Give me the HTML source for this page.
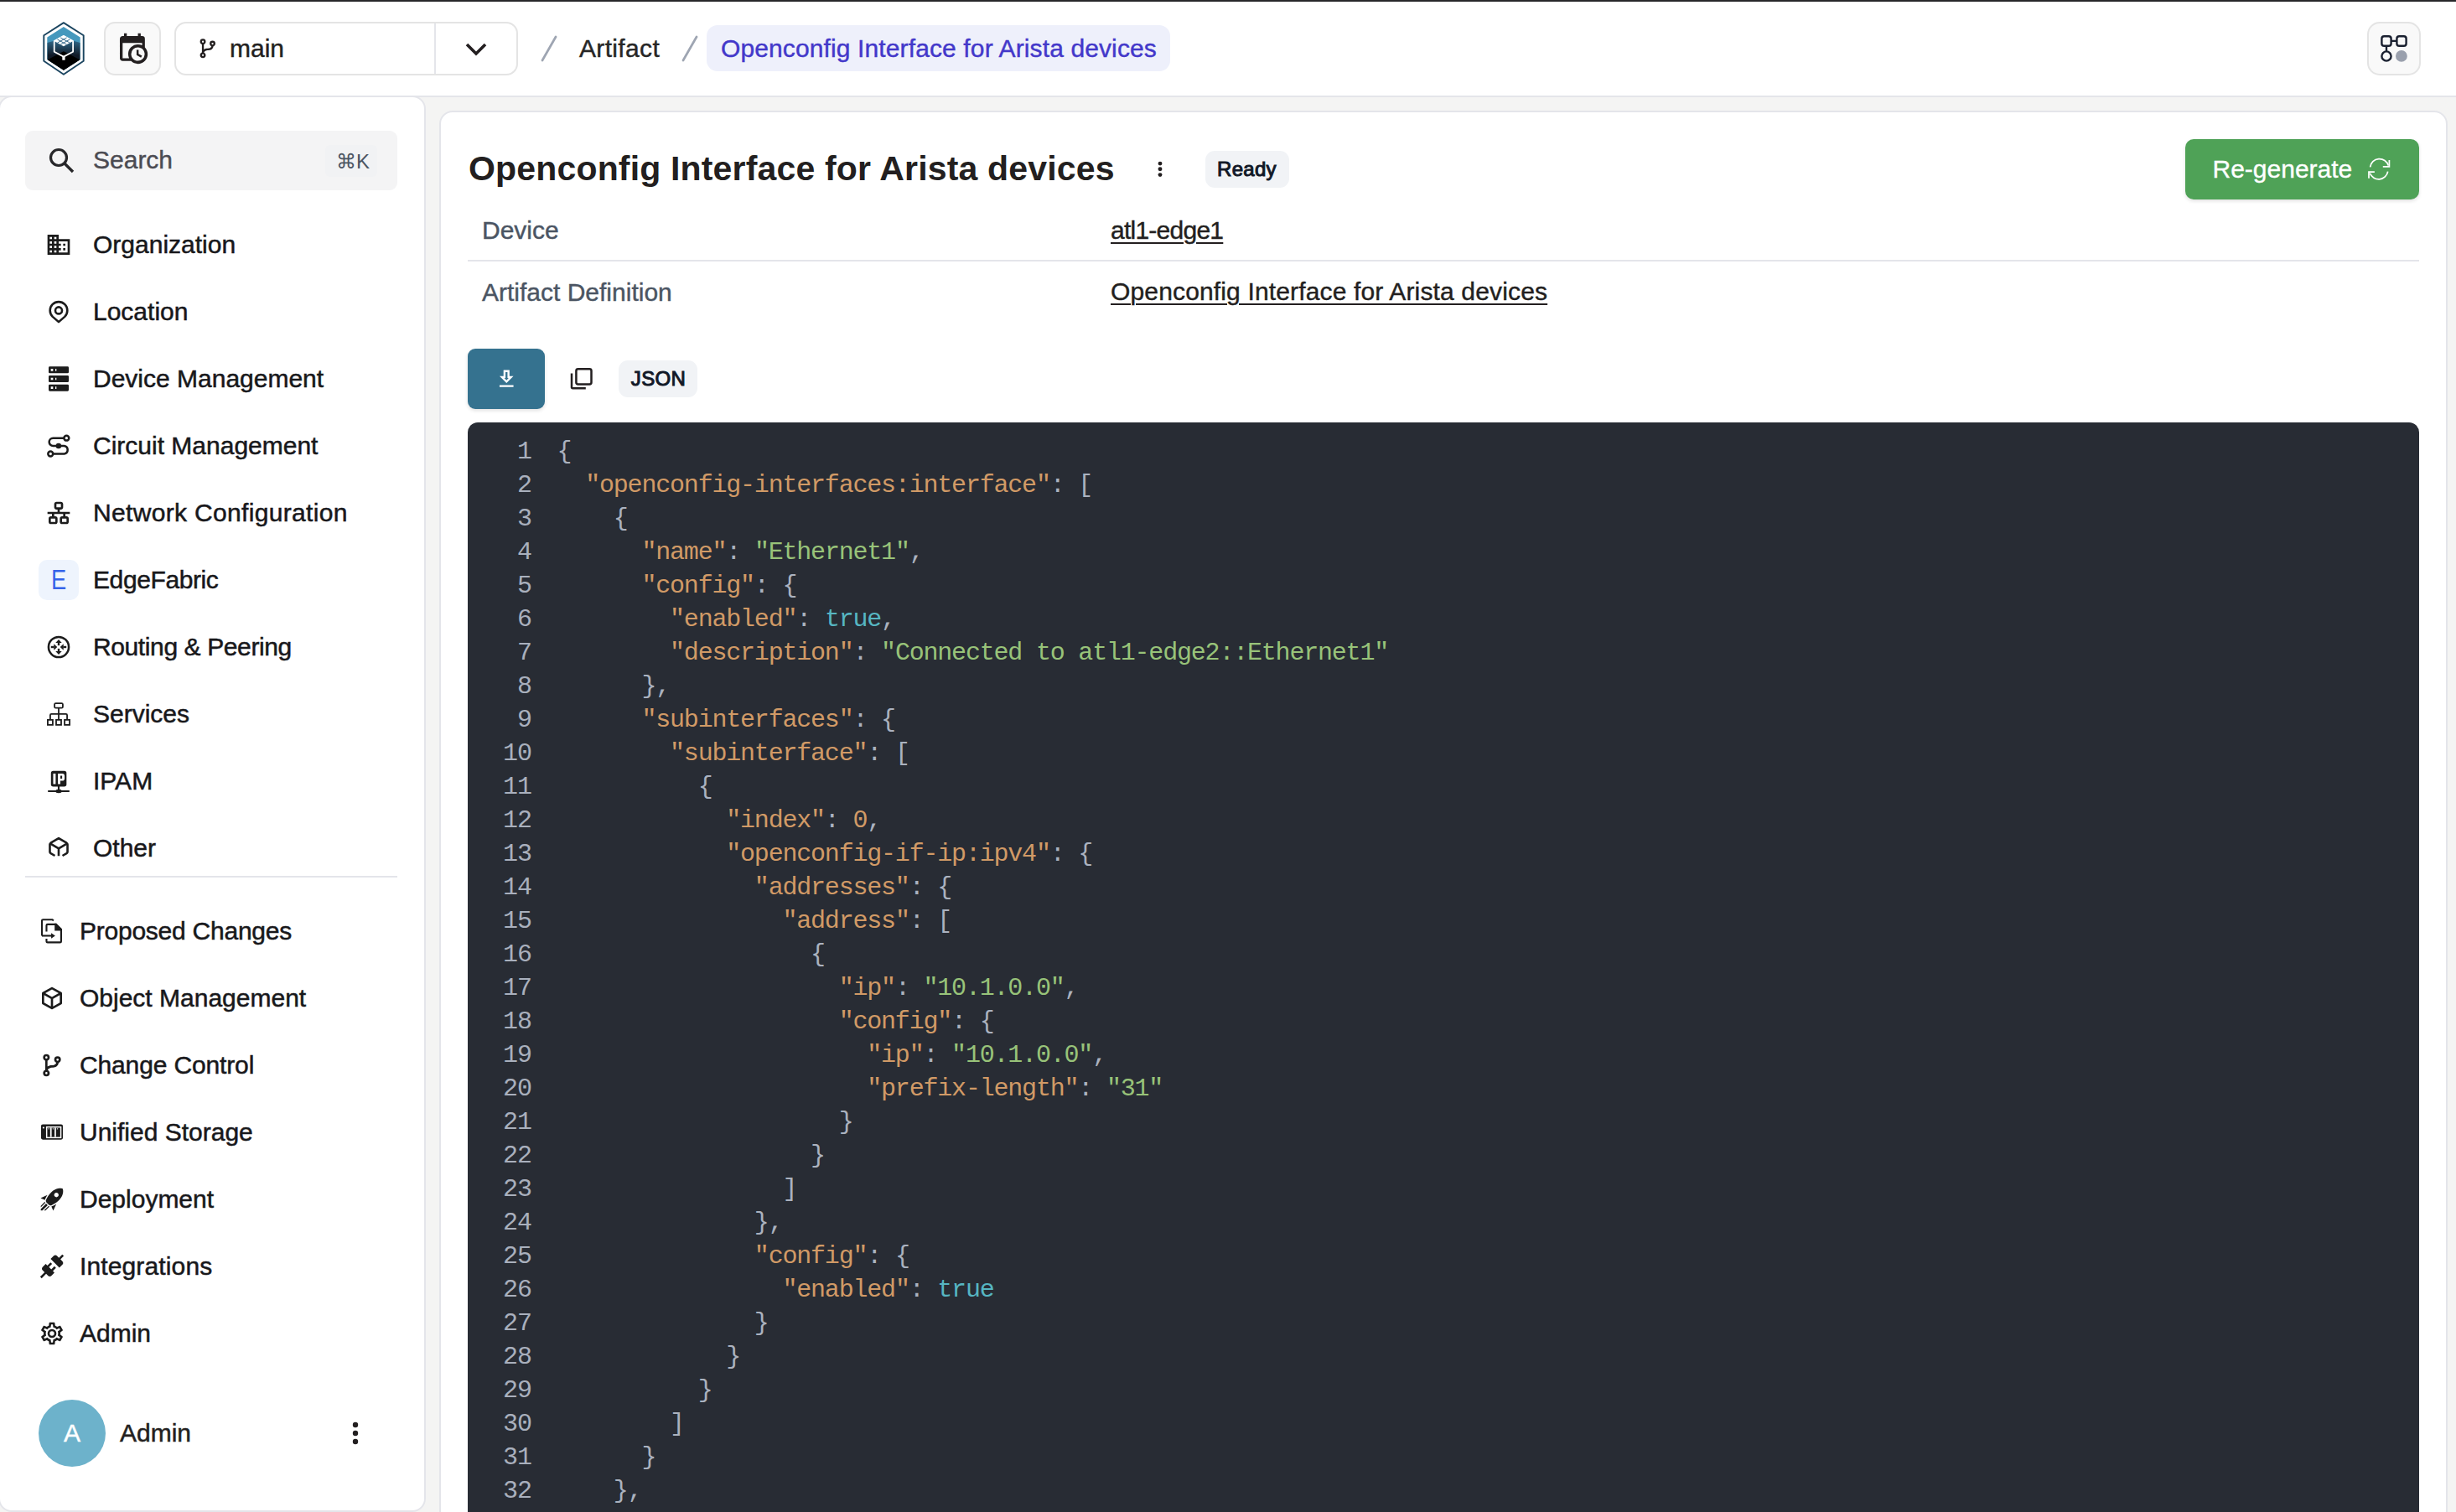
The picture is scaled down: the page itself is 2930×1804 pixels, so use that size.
<!DOCTYPE html>
<html><head><meta charset="utf-8">
<style>
*{box-sizing:border-box;margin:0;padding:0}
html,body{width:2930px;height:1804px;overflow:hidden;background:#f4f4f3;font-family:"Liberation Sans",sans-serif;color:#1f1f1f}
.a{position:absolute}
.t{position:absolute;white-space:pre;line-height:1}
#topline{left:0;top:0;width:2930px;height:2px;background:#27272a}
#header{left:0;top:2px;width:2930px;height:114px;background:#fff;border-bottom:2px solid #e4e5ea}
.btn-ghost{background:#f9f9f9;border:2px solid #e4e4e4;border-radius:12px}
#sidebar{left:-2px;top:114px;width:510px;height:1690px;background:#fff;border:2px solid #e4e5ea;border-radius:16px}
#main{left:524px;top:132px;width:2396px;height:1700px;background:#fff;border:2px solid #e4e5ea;border-radius:16px}
.nav{font-size:30px;color:#18181b;-webkit-text-stroke:0.5px #18181b}
.code{left:558px;top:504px;width:2328px;height:1320px;background:#282c34;border-radius:12px;overflow:hidden}
.ln{position:absolute;left:0;top:14.5px;width:75.7px;text-align:right;font-family:"Liberation Mono",monospace;font-size:30px;letter-spacing:-1.2px;line-height:40px;color:#a9b0bd;white-space:pre}
.cd{position:absolute;left:106.6px;top:14.5px;font-family:"Liberation Mono",monospace;font-size:30px;letter-spacing:-1.2px;line-height:40px;color:#abb2bf;white-space:pre}
.cd i{font-style:normal}
.k{color:#d19a66}.s{color:#98c379}.b{color:#56b6c2}.n{color:#d19a66}.p{color:#abb2bf}
</style></head><body>
<div id="topline" class="a"></div>
<div id="header" class="a"></div>
<!-- logo -->
<svg class="a" style="left:48px;top:24px" width="56" height="68" viewBox="0 0 56 68">
  <defs>
    <linearGradient id="lg2" x1="0" y1="24" x2="0" y2="42" gradientUnits="userSpaceOnUse">
      <stop offset="0" stop-color="#30698b"/><stop offset="1" stop-color="#111a27"/>
    </linearGradient>
    <clipPath id="hexclip"><polygon points="27.9,8.1 47.7,20.6 47.7,46.9 27.9,59.8 8.3,46.9 8.3,20.6"/></clipPath>
  </defs>
  <polygon points="27.9,3.15 51.7,18.3 51.7,48.8 27.9,64.8 4.3,48.8 4.3,18.3" fill="#fff" stroke="#1b4560" stroke-width="1.9" stroke-linejoin="round"/>
  <g clip-path="url(#hexclip)">
    <rect x="0" y="0" width="56" height="68" fill="#4598bd"/>
    <polygon points="8.3,27 27.9,21.5 47.7,27 47.7,68 8.3,68" fill="url(#lg2)"/>
    <polygon points="8.3,47.6 27.9,37.3 47.7,47.6 47.7,68 8.3,68" fill="#000"/>
  </g>
  <polygon points="27.9,18.9 39.1,25.05 39.1,37.8 27.9,43.6 16.7,37.8 16.7,25.05" fill="none" stroke="#fff" stroke-width="1.8" stroke-linejoin="round"/>
  <polygon points="27.9,18.9 39.1,25.05 27.9,31.2 16.7,25.05" fill="#fff"/>
  <path d="M24.17,20.95 L35.37,27.10 M31.63,20.95 L20.43,27.10 M20.43,23.00 L31.63,29.15 M35.37,23.00 L24.17,29.15" stroke="#3a6d8e" stroke-width="1.0"/>
  <rect x="26.3" y="43" width="3.3" height="4.7" fill="#fff"/>
</svg>
<!-- calendar button -->
<div class="a btn-ghost" style="left:124px;top:26px;width:68px;height:64px;border-radius:13px"></div>
<svg class="a" style="left:138.3px;top:37.8px" width="39.84" height="39.84" viewBox="0 0 24 24"><path fill="#231f20" d="M15,13H16.5V15.82L18.94,17.23L18.19,18.53L15,16.69V13M19,8H5V19H9.67C9.24,18.09 9,17.07 9,16A7,7 0 0,1 16,9C17.07,9 18.09,9.24 19,9.67V8M5,21C3.89,21 3,20.1 3,19V5C3,3.89 3.89,3 5,3H6V1H8V3H16V1H18V3H19A2,2 0 0,1 21,5V11.1C22.24,12.36 23,14.09 23,16A7,7 0 0,1 16,23C14.09,23 12.36,22.24 11.1,21H5M16,11.15A4.85,4.85 0 0,0 11.15,16C11.15,18.68 13.32,20.85 16,20.85A4.85,4.85 0 0,0 20.85,16C20.85,13.32 18.68,11.15 16,11.15Z"/></svg>
<!-- branch selector -->
<div class="a" style="left:208px;top:26px;width:410px;height:64px;border:2px solid #e4e4e4;border-radius:14px;background:#fff"></div>
<div class="a" style="left:518px;top:28px;width:2px;height:60px;background:#e4e5ea"></div>
<svg class="a" style="left:234.3px;top:44.3px" width="27.6" height="27.6" viewBox="0 0 24 24"><path fill="#231f20" d="M13,14C9.64,14 8.54,15.35 8.18,16.24C9.25,16.7 10,17.76 10,19A3,3 0 0,1 7,22A3,3 0 0,1 4,19C4,17.69 4.83,16.58 6,16.17V7.83C4.83,7.42 4,6.31 4,5A3,3 0 0,1 7,2A3,3 0 0,1 10,5C10,6.31 9.17,7.42 8,7.83V13.12C8.88,12.47 10.16,12 12,12C14.67,12 15.56,10.66 15.85,9.77C14.770,9.32 14,8.25 14,7A3,3 0 0,1 17,4A3,3 0 0,1 20,7C20,8.34 19.12,9.5 17.91,9.86C17.65,11.29 16.68,14 13,14M7,18A1,1 0 0,0 6,19A1,1 0 0,0 7,20A1,1 0 0,0 8,19A1,1 0 0,0 7,18M7,4A1,1 0 0,0 6,5A1,1 0 0,0 7,6A1,1 0 0,0 8,5A1,1 0 0,0 7,4M17,6A1,1 0 0,0 16,7A1,1 0 0,0 17,8A1,1 0 0,0 18,7A1,1 0 0,0 17,6Z"/></svg>
<div class="t" style="left:274px;top:42.6px;font-size:30px;color:#231f20;-webkit-text-stroke:0.4px #231f20">main</div>
<svg class="a" style="left:554px;top:49px" width="28" height="20" viewBox="0 0 28 20">
  <path d="M3,4 L14,15 L25,4" fill="none" stroke="#231f20" stroke-width="3.6"/>
</svg>
<!-- breadcrumbs -->
<svg class="a" style="left:640px;top:40px" width="200" height="36" viewBox="0 0 200 36">
  <path d="M23,4 L7,32 M191,4 L175,32" stroke="#9ea5b2" stroke-width="2.7" stroke-linecap="round"/>
</svg>
<div class="t" style="left:691px;top:43.1px;font-size:30px;color:#262626;-webkit-text-stroke:0.4px #262626;letter-spacing:0.34px">Artifact</div>
<div class="a" style="left:843px;top:30px;width:553px;height:55px;background:#eef0fb;border-radius:13px"></div>
<div class="t" style="left:860px;top:43.1px;font-size:30px;color:#4338ca;-webkit-text-stroke:0.4px #4338ca;letter-spacing:0.12px">Openconfig Interface for Arista devices</div>
<!-- right header button -->
<div class="a btn-ghost" style="left:2824px;top:26px;width:64px;height:64px;border-radius:15px"></div>
<svg class="a" style="left:2838px;top:40px" width="36" height="36" viewBox="0 0 36 36">
  <g fill="none" stroke="#1a2030" stroke-width="2.4">
  <rect x="3.4" y="3.3" width="11.2" height="11.4" rx="2.8"/><rect x="21.4" y="3.3" width="11.2" height="11.4" rx="2.8"/>
  <path d="M14.6,8.9 H21.4 M9,14.7 V21.4"/><circle cx="9" cy="27" r="5.6"/></g>
  <circle cx="26.9" cy="26.9" r="6.9" fill="#9aa0ad"/>
</svg>
<div id="sidebar" class="a"></div>
<div class="a" style="left:30px;top:156px;width:444px;height:71px;background:#f4f4f5;border-radius:9px"></div>
<svg class="a" style="left:56px;top:174px" width="36" height="36" viewBox="0 0 36 36">
  <circle cx="14" cy="14" r="9.5" fill="none" stroke="#27272a" stroke-width="3.2"/>
  <path d="M21,21 L31,31" stroke="#27272a" stroke-width="3.4"/>
</svg>
<div class="t" style="left:111px;top:176.3px;font-size:30px;color:#4b4b52;-webkit-text-stroke:0.4px #4b4b52">Search</div>
<div class="a" style="left:388px;top:173px;width:62px;height:38px;background:#f1f2f4;border-radius:6px"></div>
<div class="t" style="left:401px;top:180.7px;font-size:24px;color:#4b5563">⌘K</div>

<div class="t nav" style="left:111px;top:276.9px">Organization</div>
<div class="t nav" style="left:111px;top:356.9px">Location</div>
<div class="t nav" style="left:111px;top:436.9px">Device Management</div>
<div class="t nav" style="left:111px;top:516.9px">Circuit Management</div>
<div class="t nav" style="left:111px;top:596.9px;letter-spacing:0.33px">Network Configuration</div>
<div class="t nav" style="left:111px;top:676.9px;letter-spacing:-0.4px">EdgeFabric</div>
<div class="t nav" style="left:111px;top:756.9px;letter-spacing:-0.39px">Routing &amp; Peering</div>
<div class="t nav" style="left:111px;top:836.9px">Services</div>
<div class="t nav" style="left:111px;top:916.9px">IPAM</div>
<div class="t nav" style="left:111px;top:996.9px">Other</div>
<div class="a" style="left:30px;top:1045px;width:444px;height:2px;background:#e4e5ea"></div>
<div class="t nav" style="left:95px;top:1095.6px;letter-spacing:-0.24px">Proposed Changes</div>
<div class="t nav" style="left:95px;top:1175.6px">Object Management</div>
<div class="t nav" style="left:95px;top:1255.6px;letter-spacing:-0.14px">Change Control</div>
<div class="t nav" style="left:95px;top:1335.6px">Unified Storage</div>
<div class="t nav" style="left:95px;top:1415.6px">Deployment</div>
<div class="t nav" style="left:95px;top:1495.6px;letter-spacing:0.13px">Integrations</div>
<div class="t nav" style="left:95px;top:1575.6px">Admin</div>

<div class="a" style="left:46px;top:1670px;width:80px;height:80px;border-radius:50%;background:#6db2cb"></div>
<div class="t" style="left:46px;top:1695px;width:80px;text-align:center;font-size:30px;color:#fff;-webkit-text-stroke:0.4px #fff">A</div>
<div class="t" style="left:143px;top:1694.6px;font-size:30px;color:#231f20;-webkit-text-stroke:0.5px #231f20">Admin</div>
<svg class="a" style="left:414px;top:1694px" width="20" height="32" viewBox="0 0 20 32">
  <circle cx="10" cy="6" r="3.2" fill="#231f20"/><circle cx="10" cy="16" r="3.2" fill="#231f20"/><circle cx="10" cy="26" r="3.2" fill="#231f20"/>
</svg>
<div id="main" class="a"></div>
<div class="t" style="left:559px;top:181px;font-size:41px;font-weight:700;letter-spacing:0.17px;color:#231f20">Openconfig Interface for Arista devices</div>
<svg class="a" style="left:1374px;top:190px" width="20" height="24" viewBox="0 0 20 24">
  <circle cx="10" cy="5.1" r="2.45" fill="#231f20"/><circle cx="10" cy="11.8" r="2.45" fill="#231f20"/><circle cx="10" cy="18.6" r="2.45" fill="#231f20"/>
</svg>
<div class="a" style="left:1438px;top:180px;width:100px;height:44px;background:#f1f3f6;border-radius:11px"></div>
<div class="t" style="left:1452px;top:189.7px;font-size:24px;letter-spacing:0.3px;color:#111827;-webkit-text-stroke:1px #111827">Ready</div>
<div class="a" style="left:2607px;top:166px;width:279px;height:72px;background:#4fa257;border-radius:10px;box-shadow:0 2px 4px rgba(0,0,0,0.12)"></div>
<div class="t" style="left:2639.5px;top:186.9px;font-size:30px;color:#fff;-webkit-text-stroke:0.35px #fff">Re-generate</div>
<svg class="a" style="left:2815px;top:180px" width="45" height="45" viewBox="0 0 45 45"><g fill="none" stroke="#fff" stroke-width="1.75"><path d="M12.6,19.4 A11.1,11.1 0 0 1 34.3,17.6"/><path d="M35.4,11.1 V18.8 H27.8"/><path d="M33.7,24.6 A11.1,11.1 0 0 1 12.4,26.7"/><path d="M17.9,25.1 H11 V32.8"/></g></svg>
<div class="t" style="left:575px;top:259.6px;font-size:30px;color:#4b5563;-webkit-text-stroke:0.4px #4b5563">Device</div>
<div class="t" style="left:1325px;top:259.6px;font-size:30px;color:#231f20;text-decoration:underline;text-underline-offset:4px;text-decoration-thickness:2px;letter-spacing:-0.75px;-webkit-text-stroke:0.4px #231f20">atl1-edge1</div>
<div class="a" style="left:558px;top:310px;width:2328px;height:2px;background:#e4e5ea"></div>
<div class="t" style="left:575px;top:334.2px;font-size:30px;color:#4b5563;-webkit-text-stroke:0.4px #4b5563">Artifact Definition</div>
<div class="t" style="left:1325px;top:333px;font-size:30px;color:#231f20;text-decoration:underline;text-underline-offset:4px;text-decoration-thickness:2px;letter-spacing:0.15px;-webkit-text-stroke:0.4px #231f20">Openconfig Interface for Arista devices</div>
<div class="a" style="left:558px;top:416px;width:92px;height:72px;background:#35728f;border-radius:9px;box-shadow:0 2px 4px rgba(0,0,0,0.12)"></div>
<svg class="a" style="left:589.8px;top:438px" width="28.5" height="28.5" viewBox="0 0 24 24"><path fill="#fff" d="M13,5V11H14.17L12,13.17L9.83,11H11V5H13M15,3H9V9H5L12,16L19,9H15V3M19,18H5V20H19V18Z"/></svg>
<svg class="a" style="left:676px;top:434px" width="36" height="36" viewBox="0 0 36 36"><g fill="none" stroke="#231f20" stroke-width="2.5"><rect x="11.4" y="6.25" width="18.1" height="18.2" rx="2.2"/><path d="M6,11.4 V28.2 a1.1,1.1 0 0 0 1.1,1.1 H22.8"/></g></svg>
<div class="a" style="left:738px;top:430px;width:94px;height:44px;background:#f1f3f6;border-radius:11px"></div>
<div class="t" style="left:752.8px;top:439.7px;font-size:24px;letter-spacing:0.35px;color:#111827;-webkit-text-stroke:1px #111827">JSON</div>
<div class="a code">
<div class="ln">1
2
3
4
5
6
7
8
9
10
11
12
13
14
15
16
17
18
19
20
21
22
23
24
25
26
27
28
29
30
31
32
33
34</div><div class="cd"><i class="p">{</i>
  <i class="k">&quot;openconfig-interfaces:interface&quot;</i><i class="p">:</i> <i class="p">[</i>
    <i class="p">{</i>
      <i class="k">&quot;name&quot;</i><i class="p">:</i> <i class="s">&quot;Ethernet1&quot;</i><i class="p">,</i>
      <i class="k">&quot;config&quot;</i><i class="p">:</i> <i class="p">{</i>
        <i class="k">&quot;enabled&quot;</i><i class="p">:</i> <i class="b">true</i><i class="p">,</i>
        <i class="k">&quot;description&quot;</i><i class="p">:</i> <i class="s">&quot;Connected to atl1-edge2::Ethernet1&quot;</i>
      <i class="p">}</i><i class="p">,</i>
      <i class="k">&quot;subinterfaces&quot;</i><i class="p">:</i> <i class="p">{</i>
        <i class="k">&quot;subinterface&quot;</i><i class="p">:</i> <i class="p">[</i>
          <i class="p">{</i>
            <i class="k">&quot;index&quot;</i><i class="p">:</i> <i class="n">0</i><i class="p">,</i>
            <i class="k">&quot;openconfig-if-ip:ipv4&quot;</i><i class="p">:</i> <i class="p">{</i>
              <i class="k">&quot;addresses&quot;</i><i class="p">:</i> <i class="p">{</i>
                <i class="k">&quot;address&quot;</i><i class="p">:</i> <i class="p">[</i>
                  <i class="p">{</i>
                    <i class="k">&quot;ip&quot;</i><i class="p">:</i> <i class="s">&quot;10.1.0.0&quot;</i><i class="p">,</i>
                    <i class="k">&quot;config&quot;</i><i class="p">:</i> <i class="p">{</i>
                      <i class="k">&quot;ip&quot;</i><i class="p">:</i> <i class="s">&quot;10.1.0.0&quot;</i><i class="p">,</i>
                      <i class="k">&quot;prefix-length&quot;</i><i class="p">:</i> <i class="s">&quot;31&quot;</i>
                    <i class="p">}</i>
                  <i class="p">}</i>
                <i class="p">]</i>
              <i class="p">}</i><i class="p">,</i>
              <i class="k">&quot;config&quot;</i><i class="p">:</i> <i class="p">{</i>
                <i class="k">&quot;enabled&quot;</i><i class="p">:</i> <i class="b">true</i>
              <i class="p">}</i>
            <i class="p">}</i>
          <i class="p">}</i>
        <i class="p">]</i>
      <i class="p">}</i>
    <i class="p">}</i><i class="p">,</i>
    <i class="p">{</i>
      <i class="k">&quot;name&quot;</i><i class="p">:</i> <i class="s">&quot;Ethernet2&quot;</i><i class="p">,</i></div></div>
<!-- sidebar group 1 icons: 32px boxes, left 54 -->
<svg class="a" style="left:54px;top:276px" width="32" height="32" viewBox="0 0 24 24"><path fill="#1c1c1c" d="M18,15H16V17H18M18,11H16V13H18M20,19H12V17H14V15H12V13H14V11H12V9H20M10,7H8V5H10M10,11H8V9H10M10,15H8V13H10M10,19H8V17H10M6,7H4V5H6M6,11H4V9H6M6,15H4V13H6M6,19H4V17H6M12,7V3H2V21H22V7H12Z"/></svg>
<svg class="a" style="left:54px;top:356px" width="32" height="32" viewBox="0 0 24 24"><g fill="none" stroke="#1c1c1c" stroke-width="1.95" stroke-linejoin="round"><path d="M12,21.1 L6.6,16.4 A7.75,7.75 0 1 1 17.4,16.4 Z"/><circle cx="12" cy="10.8" r="3"/></g></svg>
<svg class="a" style="left:54px;top:436px" width="32" height="32" viewBox="0 0 24 24"><path fill="#1c1c1c" d="M4,1H20A1,1 0 0,1 21,2V6A1,1 0 0,1 20,7H4A1,1 0 0,1 3,6V2A1,1 0 0,1 4,1M4,9H20A1,1 0 0,1 21,10V14A1,1 0 0,1 20,15H4A1,1 0 0,1 3,14V10A1,1 0 0,1 4,9M4,17H20A1,1 0 0,1 21,18V22A1,1 0 0,1 20,23H4A1,1 0 0,1 3,22V18A1,1 0 0,1 4,17M9,5H10V3H9V5M9,13H10V11H9V13M9,21H10V19H9V21M5,3V5H7V3H5M5,11V13H7V11H5M5,19V21H7V19H5Z"/></svg>
<svg class="a" style="left:54px;top:516px" width="32" height="32" viewBox="0 0 24 24"><g fill="none" stroke="#1c1c1c" stroke-width="1.9"><path d="M16.8,5 H7 A3.5,3.5 0 0 0 7,12 H17 A3.6,3.6 0 0 1 17,19.1 H6.9"/><circle cx="19" cy="5" r="2.2"/><circle cx="4.7" cy="19.1" r="2.2"/></g><circle cx="11.9" cy="12" r="2.5" fill="#1c1c1c"/></svg>
<svg class="a" style="left:54px;top:596px" width="32" height="32" viewBox="0 0 24 24"><path fill="#1c1c1c" d="M10,2C8.89,2 8,2.89 8,4V7C8,8.11 8.89,9 10,9H11V11H2V13H6V15H5C3.89,15 3,15.89 3,17V20C3,21.11 3.89,22 5,22H9C10.11,22 11,21.11 11,20V17C11,15.89 10.11,15 9,15H8V13H16V15H15C13.89,15 13,15.89 13,17V20C13,21.11 13.89,22 15,22H19C20.11,22 21,21.11 21,20V17C21,15.89 20.11,15 19,15H18V13H22V11H13V9H14C15.11,9 16,8.11 16,7V4C16,2.89 15.11,2 14,2H10M10,4H14V7H10V4M5,17H9V20H5V17M15,17H19V20H15V17Z"/></svg>
<div class="a" style="left:46px;top:668px;width:48px;height:48px;background:#eef4fd;border-radius:10px"></div>
<div class="t" style="left:46px;top:675.6px;width:48px;text-align:center;font-size:32.5px;color:#3563e9;transform:scaleX(0.84)">E</div>
<svg class="a" style="left:54px;top:756px" width="32" height="32" viewBox="0 0 24 24"><circle cx="12" cy="12" r="9.05" fill="none" stroke="#1c1c1c" stroke-width="1.9"/><g fill="#1c1c1c"><path d="M12,5.2 L14.8,8.2 H9.2Z M12,18.8 L14.8,15.8 H9.2Z M10.7,12 L7.7,9.2 V14.8Z M13.3,12 L16.3,9.2 V14.8Z"/><rect x="11.1" y="8" width="1.8" height="2.6"/><rect x="11.1" y="13.4" width="1.8" height="2.6"/><rect x="5.1" y="11.1" width="2.8" height="1.8"/><rect x="16.1" y="11.1" width="2.8" height="1.8"/></g></svg>
<svg class="a" style="left:54px;top:836px" width="32" height="32" viewBox="0 0 24 24"><g fill="none" stroke="#1c1c1c" stroke-width="1.35"><rect x="8.3" y="2.35" width="7.4" height="4.1" rx="1.1"/><path d="M12,6.4 V17 M4.45,17.1 V13 Q4.45,11.95 5.5,11.95 H18.5 Q19.55,11.95 19.55,13 V17.1"/><rect x="2.2" y="17.15" width="4.5" height="4.5"/><rect x="9.75" y="17.15" width="4.5" height="4.5"/><rect x="17.3" y="17.15" width="4.5" height="4.5"/></g></svg>
<svg class="a" style="left:54px;top:916px" width="32" height="32" viewBox="0 0 24 24"><rect x="5.1" y="2.9" width="13.9" height="13.9" rx="2" fill="#1c1c1c"/><path fill="#fff" d="M7.1,5.2 H9.3 V14.6 H7.1Z M11.3,5.2 H15.3 Q17.3,5.2 17.3,7.4 V9.5 Q17.3,11.6 15.3,11.6 H13.5 V14.6 H11.3Z M13.5,7.1 V9.7 H15.1 V7.1Z"/><rect x="11.2" y="16.5" width="1.6" height="3.5" fill="#1c1c1c"/><rect x="2.2" y="20.2" width="19.6" height="1.6" rx="0.8" fill="#1c1c1c"/><ellipse cx="12" cy="21" rx="2.8" ry="1.7" fill="#1c1c1c"/></svg>
<svg class="a" style="left:54px;top:996px" width="32" height="32" viewBox="0 0 24 24"><g fill="none" stroke="#1c1c1c" stroke-width="1.95" stroke-linejoin="round"><path d="M8.6,18.75 L4.9,16.6 Q4.1,16.1 4.1,15.2 V8.6 Q4.1,7.8 4.9,7.3 L12,3.1 L19.1,7.3 Q19.9,7.8 19.9,8.6 V15.2 Q19.9,16.1 19.1,16.6 L15.4,18.75"/><path d="M4.4,7.7 L12,12.2 L19.6,7.7 M12,12.2 V18.9"/></g></svg>
<!-- group 2 -->
<svg class="a" style="left:46px;top:1095px" width="32" height="32" viewBox="0 0 24 24"><g fill="none" stroke="#1c1c1c" stroke-width="1.6"><path d="M3,16.1 V2.7 Q3,1.7 4,1.7 H12.4 L13.4,2.6"/><path d="M3,16.1 H12.5"/><path d="M7.1,12.4 V6.9 Q7.1,5.9 8.1,5.9 H15.6 L20.2,10.5 V21.1 Q20.2,22 19.2,22 H8.1 Q7.1,22 7.1,21.1 V18.7"/></g><path fill="#1c1c1c" d="M11.3,13.6 L14.9,16.1 L11.3,18.6Z M14.4,5.1 H15.9 L21,10.2 V11.55 H14.4Z"/></svg>
<svg class="a" style="left:46.2px;top:1175.3px" width="32" height="32" viewBox="0 0 24 24"><path fill="#1c1c1c" d="M21,16.5C21,16.88 20.79,17.21 20.47,17.38L12.57,21.82C12.41,21.94 12.21,22 12,22C11.79,22 11.59,21.94 11.43,21.82L3.53,17.38C3.21,17.21 3,16.88 3,16.5V7.5C3,7.12 3.21,6.79 3.53,6.62L11.43,2.18C11.59,2.06 11.79,2 12,2C12.21,2 12.41,2.06 12.570,2.18L20.47,6.62C20.79,6.79 21,7.12 21,7.5V16.5M12,4.15L6.04,7.5L12,10.85L17.96,7.5L12,4.15M5,15.91L11,19.29V12.58L5,9.21V15.91M19,15.91V9.21L13,12.58V19.29L19,15.91Z"/></svg>
<svg class="a" style="left:46.2px;top:1255px" width="32" height="32" viewBox="0 0 24 24"><path fill="#1c1c1c" d="M13,14C9.64,14 8.54,15.35 8.18,16.24C9.25,16.7 10,17.760 10,19A3,3 0 0,1 7,22A3,3 0 0,1 4,19C4,17.69 4.83,16.58 6,16.17V7.83C4.83,7.42 4,6.31 4,5A3,3 0 0,1 7,2A3,3 0 0,1 10,5C10,6.31 9.17,7.42 8,7.83V13.12C8.88,12.47 10.16,12 12,12C14.67,12 15.56,10.66 15.85,9.77C14.77,9.32 14,8.25 14,7A3,3 0 0,1 17,4A3,3 0 0,1 20,7C20,8.34 19.12,9.5 17.91,9.86C17.65,11.29 16.68,14 13,14M7,18A1,1 0 0,0 6,19A1,1 0 0,0 7,20A1,1 0 0,0 8,19A1,1 0 0,0 7,18M7,4A1,1 0 0,0 6,5A1,1 0 0,0 7,6A1,1 0 0,0 8,5A1,1 0 0,0 7,4M17,6A1,1 0 0,0 16,7A1,1 0 0,0 17,8A1,1 0 0,0 18,7A1,1 0 0,0 17,6Z"/></svg>
<svg class="a" style="left:46px;top:1335px" width="32" height="32" viewBox="0 0 24 24"><rect x="2.2" y="4.95" width="19.6" height="13.55" rx="1.6" fill="#1c1c1c"/><rect x="6.7" y="6.7" width="13.8" height="10.6" fill="#fff"/><rect x="7.8" y="7.8" width="11.6" height="8.4" fill="#1c1c1c"/><rect x="10.4" y="7.8" width="1.3" height="8.4" fill="#fff"/><rect x="14.3" y="7.8" width="1.3" height="8.4" fill="#fff"/><g fill="#fff"><circle cx="9.1" cy="8.9" r="0.55"/><circle cx="13" cy="8.9" r="0.55"/><circle cx="16.9" cy="8.9" r="0.55"/><circle cx="4.4" cy="7.9" r="0.8"/></g></svg>
<svg class="a" style="left:46px;top:1415px" width="32" height="32" viewBox="0 0 24 24"><path fill="#1c1c1c" d="M13.13 22.19L11.5 18.36C13.07 17.78 14.54 17 15.9 16.09L13.13 22.19M5.64 12.5L1.81 10.87L7.91 8.1C7 9.46 6.22 10.93 5.64 12.5M21.61 2.39C21.61 2.39 16.66 .269 11 5.93C8.81 8.12 7.5 10.53 6.65 12.64C6.37 13.39 6.56 14.21 7.11 14.77L9.24 16.89C9.79 17.45 10.61 17.63 11.36 17.35C13.5 16.53 15.88 15.19 18.070 13C23.73 7.34 21.61 2.39 21.61 2.39M14.54 9.46C13.76 8.68 13.76 7.41 14.54 6.63S16.59 5.85 17.37 6.63C18.14 7.41 18.15 8.68 17.37 9.46C16.59 10.24 15.32 10.24 14.54 9.46M8.88 16.53L7.47 15.12L8.88 16.53M6.24 22L9.88 18.36C9.54 18.27 9.21 18.12 8.91 17.91L4.83 22H6.24M2 22H3.41L8.18 17.24L6.76 15.83L2 20.59V22M2 19.17L6.09 15.09C5.88 14.79 5.73 14.47 5.64 14.12L2 17.76V19.17Z"/></svg>
<svg class="a" style="left:46.1px;top:1495.3px" width="32" height="32" viewBox="0 0 24 24"><path fill="#1c1c1c" d="M21.4 7.5C22.2 8.3 22.2 9.6 21.4 10.3L18.6 13.1L10.8 5.3L13.6 2.5C14.4 1.7 15.7 1.7 16.4 2.5L18.2 4.3L21.2 1.3L22.6 2.7L19.6 5.7L21.4 7.5M15.6 13.3L14.2 11.9L11.4 14.7L9.3 12.6L12.1 9.8L10.7 8.4L7.9 11.2L6.4 9.8L3.6 12.6C2.8 13.4 2.8 14.7 3.6 15.4L5.4 17.2L1.4 21.2L2.8 22.6L6.8 18.6L8.6 20.4C9.4 21.2 10.7 21.2 11.4 20.4L14.2 17.6L12.8 16.2L15.6 13.3Z"/></svg>
<svg class="a" style="left:45.7px;top:1575px" width="32" height="32" viewBox="0 0 24 24"><path fill="#1c1c1c" d="M12,8A4,4 0 0,1 16,12A4,4 0 0,1 12,16A4,4 0 0,1 8,12A4,4 0 0,1 12,8M12,10A2,2 0 0,0 10,12A2,2 0 0,0 12,14A2,2 0 0,0 14,12A2,2 0 0,0 12,10M10,22C9.75,22 9.54,21.82 9.5,21.58L9.13,18.930C8.5,18.68 7.96,18.34 7.44,17.94L4.95,18.95C4.73,19.03 4.46,18.95 4.34,18.73L2.34,15.27C2.21,15.05 2.27,14.78 2.46,14.63L4.57,12.97L4.5,12L4.57,11L2.46,9.37C2.27,9.22 2.21,8.95 2.34,8.73L4.34,5.27C4.46,5.05 4.73,4.96 4.95,5.05L7.44,6.05C7.96,5.66 8.5,5.32 9.13,5.07L9.5,2.42C9.54,2.18 9.75,2 10,2H14C14.25,2 14.46,2.18 14.5,2.42L14.87,5.07C15.5,5.32 16.04,5.66 16.56,6.05L19.05,5.05C19.27,4.96 19.54,5.05 19.66,5.27L21.66,8.73C21.79,8.95 21.73,9.22 21.54,9.37L19.43,11L19.5,12L19.43,13L21.54,14.63C21.73,14.78 21.79,15.05 21.66,15.27L19.66,18.73C19.54,18.95 19.27,19.04 19.05,18.95L16.56,17.95C16.04,18.34 15.5,18.68 14.87,18.93L14.5,21.58C14.46,21.82 14.25,22 14,22H10M11.25,4L10.88,6.61C9.68,6.86 8.62,7.5 7.85,8.39L5.44,7.35L4.69,8.65L6.8,10.2C6.4,11.37 6.4,12.64 6.8,13.8L4.68,15.36L5.43,16.66L7.86,15.62C8.63,16.5 9.68,17.14 10.87,17.38L11.24,20H12.76L13.13,17.39C14.32,17.14 15.37,16.5 16.14,15.620L18.57,16.66L19.32,15.36L17.2,13.81C17.6,12.64 17.6,11.37 17.2,10.2L19.31,8.65L18.56,7.35L16.15,8.39C15.38,7.5 14.32,6.86 13.12,6.62L12.75,4H11.25Z"/></svg>

<script>(function(){var s=window.innerWidth/2930;if(Math.abs(s-1)>0.001){var d=document.documentElement;d.style.transformOrigin="0 0";d.style.transform="scale("+s+")";}})();</script>
</body></html>
